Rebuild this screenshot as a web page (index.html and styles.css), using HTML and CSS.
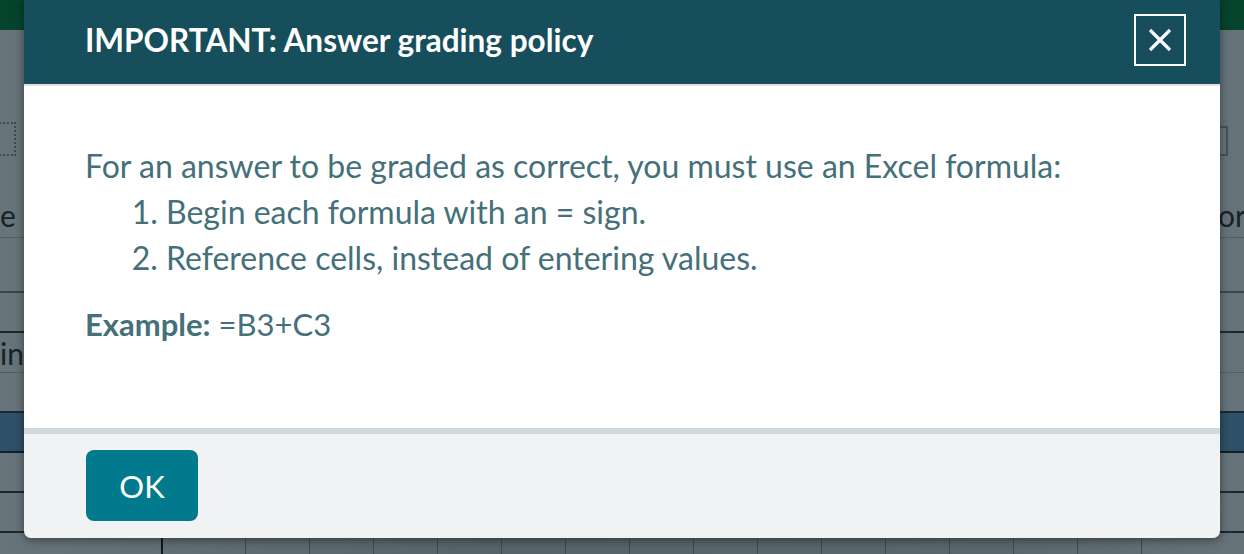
FILE: index.html
```html
<!DOCTYPE html>
<html lang="en">
<head>
  <meta charset="UTF-8">
  <meta name="viewport" content="width=device-width, initial-scale=1.0">
  <title>Answer grading policy</title>

  <link rel="stylesheet" href="styles.css">
</head>
<body>
  <div class="sheet">
    <div class="topbar"></div>
    <div class="toolbar">
      <span class="tool-icon"></span>
      <span class="tool-icon right"></span>
    </div>
    <div class="row thin"></div>
    <div class="row head">
      <span class="cell-text">e a</span>
      <span class="cell-text far">or</span>
    </div>
    <div class="row tall"></div>
    <div class="row dark-line"></div>
    <div class="row"><span class="cell-text">in</span></div>
    <div class="row dark-line"></div>
    <div class="row selected"></div>
    <div class="row dark-line"></div>
    <div class="row dark-line"></div>
    <div class="row cols">
      <span class="col first"></span>
      <span class="col"></span><span class="col"></span><span class="col"></span>
      <span class="col"></span><span class="col"></span><span class="col"></span>
      <span class="col"></span><span class="col"></span><span class="col"></span>
      <span class="col"></span><span class="col"></span><span class="col"></span>
      <span class="col"></span><span class="col"></span><span class="col"></span>
    </div>
  </div>

  <div class="modal">
    <div class="modal-header">
      <h2 class="modal-title">IMPORTANT: Answer grading policy</h2>
      <button class="close-btn" aria-label="Close">
        <svg width="24" height="24" viewBox="0 0 24 24">
          <path d="M2 2 L22 22 M22 2 L2 22" stroke="#fff" stroke-width="3.2" fill="none"/>
        </svg>
      </button>
    </div>
    <div class="modal-body">
      <p>For an answer to be graded as correct, you must use an Excel formula:</p>
      <ol>
        <li>Begin each formula with an = sign.</li>
        <li>Reference cells, instead of entering values.</li>
      </ol>
      <p class="example"><strong>Example:</strong> =B3+C3</p>
    </div>
    <div class="modal-footer">
      <button class="btn-ok">OK</button>
    </div>
  </div>
</body>
</html>
```

FILE: styles.css
```css
* {
  box-sizing: border-box;
  padding: 0;
  margin: 0;
}

body {
  font-family: Lato, 'Noto Sans', sans-serif;
  width: 1244px;
  height: 554px;
  overflow: hidden;
  background-color: #5d6970;
}

/* dimmed sheet behind the dialog */
.sheet {
  height: 554px;
  background: linear-gradient(to right, #68747b, #56636a 40%, #5a676e 80%, #67737a);
}

.topbar {
  height: 30px;
  background-color: #06432c;
}

.toolbar {
  height: 153px;
  position: relative;
}

.tool-icon {
  position: absolute;
  left: -8px;
  top: 92px;
  width: 24px;
  height: 34px;
  border: 2px dotted #3e4a51;
}

.tool-icon.right {
  left: 1218px;
  top: 96px;
  width: 10px;
  height: 30px;
  border: 2px solid #46525a;
}

.row {
  height: 40px;
  border-bottom: 1px solid #525e65;
  display: flex;
  align-items: center;
  position: relative;
}

.row.thin {
  height: 10px;
  border-bottom-color: #6a757c;
}

.row.head {
  height: 45px;
}

.row.tall {
  height: 55px;
  border-bottom: 2px solid #3b464c;
}

.row.dark-line {
  border-bottom: 2px solid #1d282e;
}

.row.selected {
  background-color: #2e5068;
  border-bottom: 2px solid #12202a;
}

.row.cols {
  border: none;
  height: 21px;
  align-items: stretch;
}

.col {
  width: 64px;
  border-right: 1px solid #3f4b52;
}

.col.first {
  width: 163px;
  border-right: 2px solid #111b20;
}

.col.first + .col {
  width: 83px;
}

.cell-text {
  font-size: 30px;
  color: #172228;
  position: absolute;
  left: 0;
}

.cell-text.far {
  left: 1218px;
}

/* dialog */
.modal {
  position: absolute;
  left: 24px;
  top: 0;
  width: 1196px;
  border-radius: 0 0 7px 7px;
  overflow: hidden;
  box-shadow: 0 2px 10px rgba(0, 0, 0, 0.45);
}

.modal-header {
  height: 86px;
  background-color: #174e5c;
  border-bottom: 2px solid #e1e3e3;
  display: flex;
  align-items: center;
  justify-content: space-between;
  padding: 0 34px 4px 61px;
}

.modal-title {
  color: #fff;
  font-size: 31.5px;
  font-weight: 700;
}

.close-btn {
  width: 52px;
  height: 52px;
  background: none;
  border: 2px solid #fff;
  display: flex;
  align-items: center;
  justify-content: center;
}

.modal-body {
  height: 342px;
  background-color: #fff;
  padding: 57px 61px 0;
  color: #44707a;
  font-size: 32px;
  line-height: 46px;
}

.modal-body ol {
  padding-left: 81px;
}

.example {
  margin-top: 20px;
  font-size: 31px;
}

.example strong {
  font-weight: 700;
}

.modal-footer {
  height: 110px;
  background-color: #f1f2f4;
  border-top: 6px solid #d0d9dc;
  padding: 16px 62px;
}

.btn-ok {
  width: 112px;
  height: 71px;
  background-color: #007a8c;
  color: #fff;
  border: none;
  border-radius: 8px;
  font-family: Lato, 'Noto Sans', sans-serif;
  font-size: 31px;
}
```
